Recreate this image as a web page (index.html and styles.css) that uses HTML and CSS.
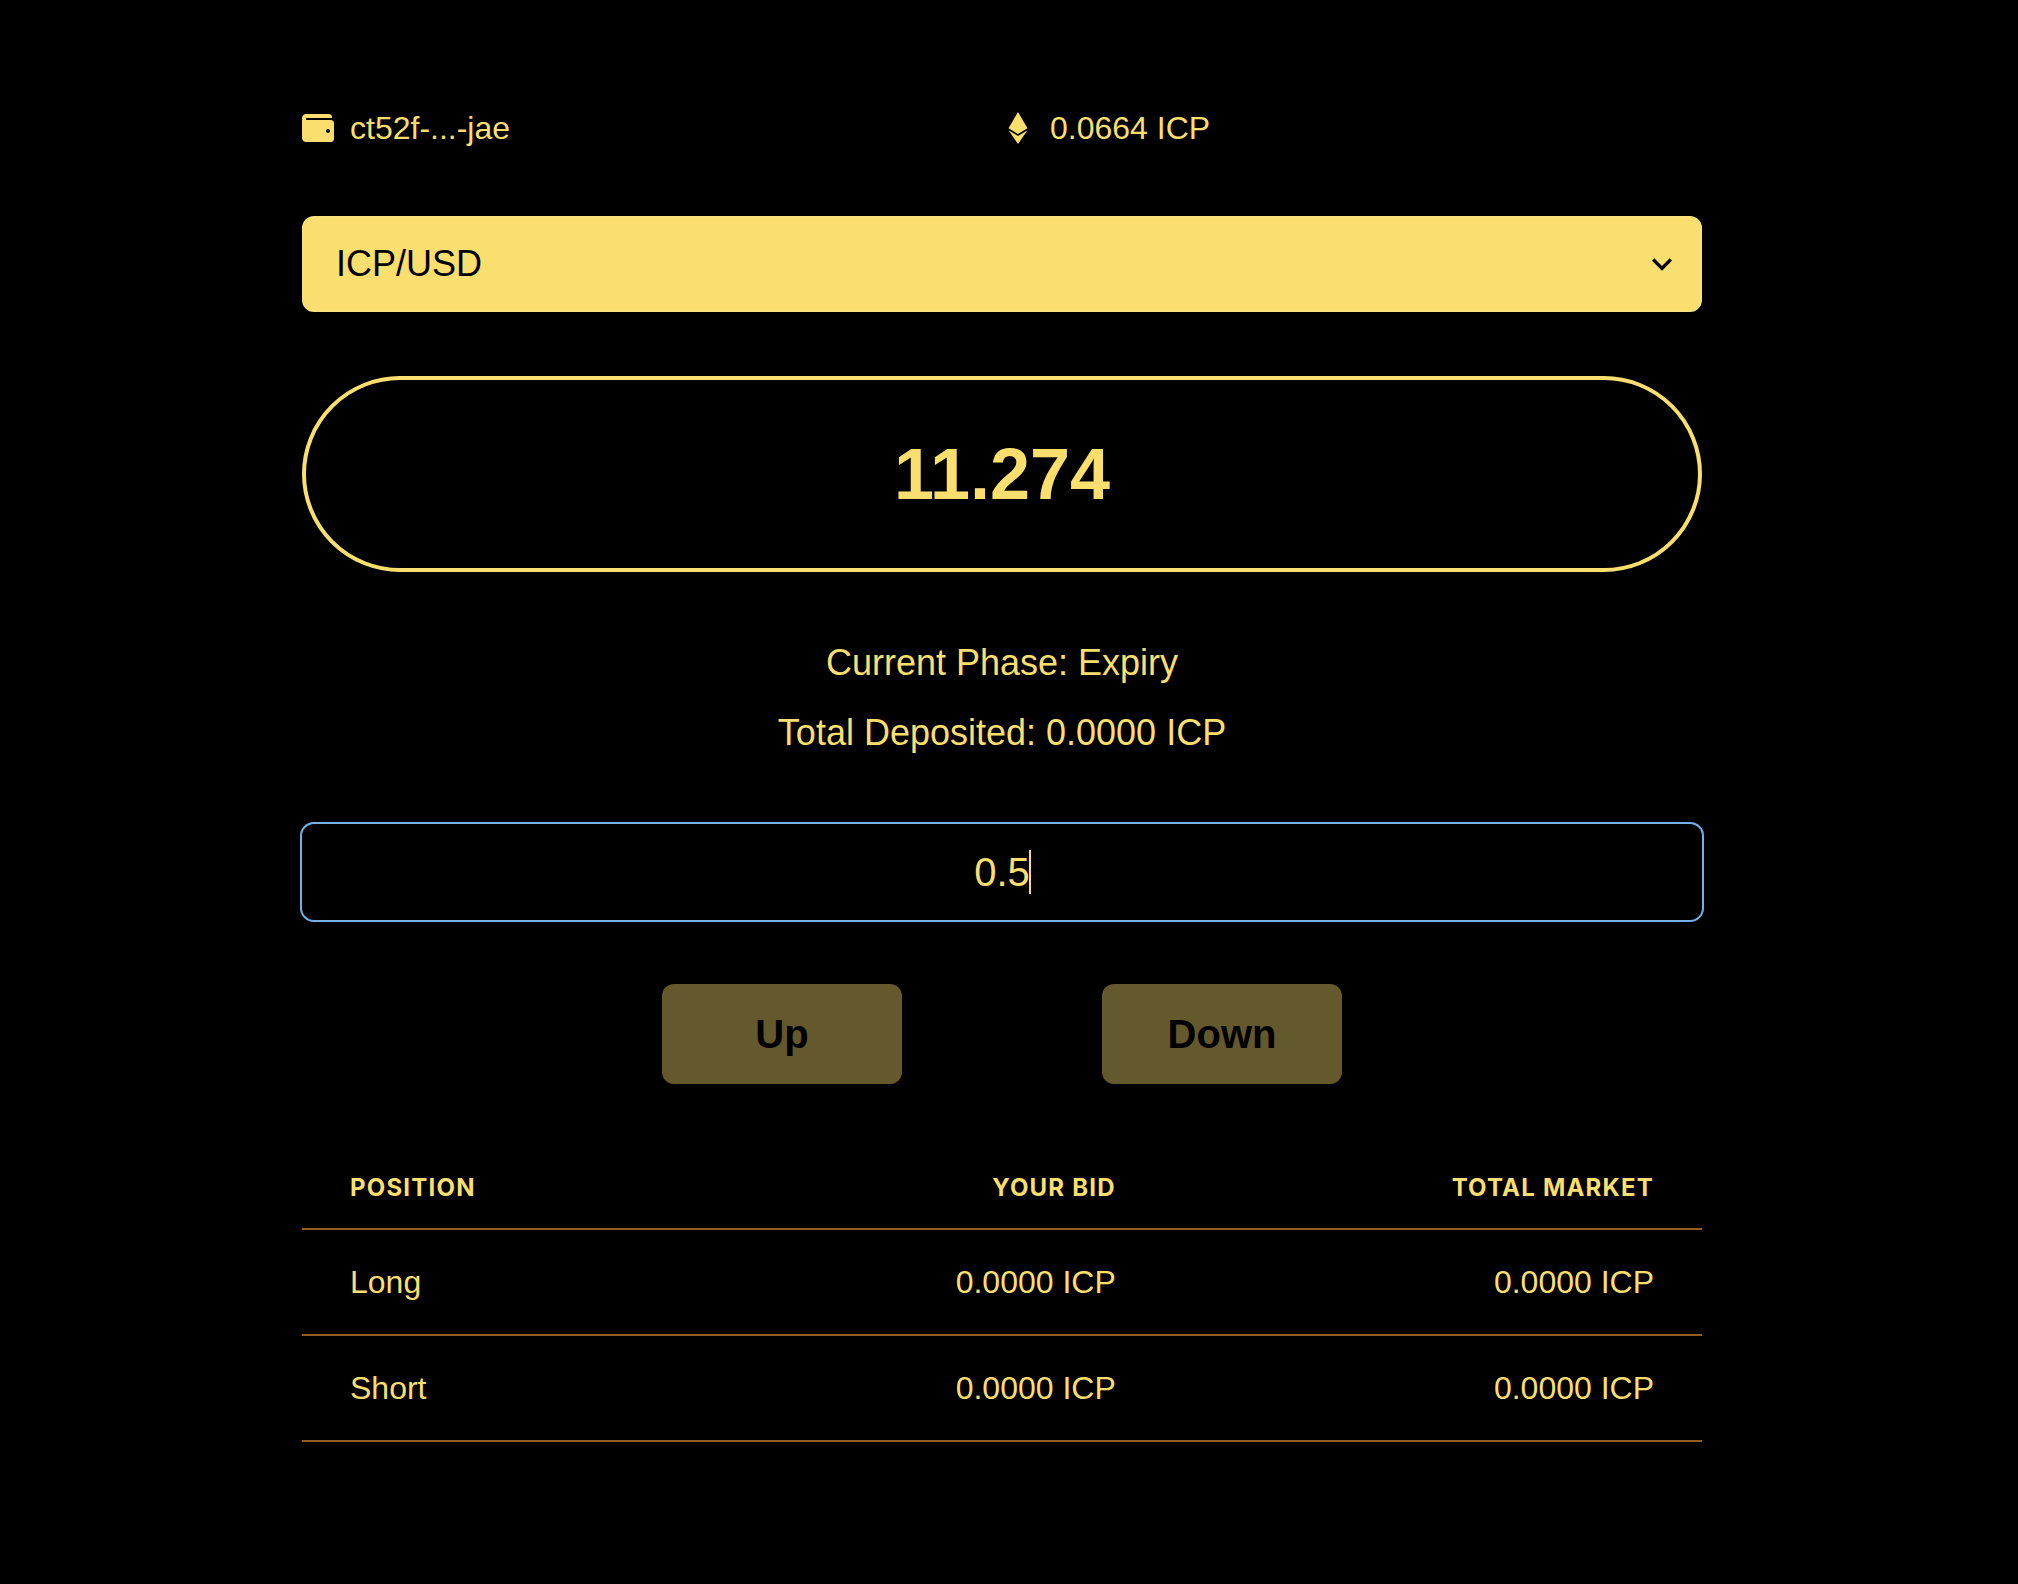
FILE: index.html
```html
<!DOCTYPE html>
<html lang="en">
<head>
  <meta charset="utf-8">
  <meta name="viewport" content="width=device-width, initial-scale=1">
  <title>ICP/USD</title>
  <link rel="stylesheet" href="styles.css">
</head>
<body>
  <main class="page">
    <header class="account">
      <div class="account-item">
        <svg class="icon" viewBox="0 0 512 512" aria-hidden="true"><path d="M461.2 128H80c-8.84 0-16-7.16-16-16s7.16-16 16-16h384c8.84 0 16-7.16 16-16 0-26.51-21.49-48-48-48H64C28.65 32 0 60.65 0 96v320c0 35.35 28.65 64 64 64h397.2c28.02 0 50.8-21.53 50.8-48V176c0-26.47-22.78-48-50.8-48zM416 336c-17.67 0-32-14.33-32-32s14.33-32 32-32 32 14.33 32 32-14.33 32-32 32z"/></svg>
        <span>ct52f-...-jae</span>
      </div>
      <div class="account-item">
        <svg class="icon" viewBox="0 0 320 512" aria-hidden="true"><path d="M311.9 260.8L160 353.6 8 260.8 160 0l151.9 260.8zM160 383.4L8 290.6 160 512l152-221.4-152 92.8z"/></svg>
        <span>0.0664 ICP</span>
      </div>
    </header>

    <div class="pair">
      <select class="pair-select" aria-label="Market">
        <option>ICP/USD</option>
      </select>
      <svg class="pair-arrow" viewBox="0 0 24 24" aria-hidden="true"><path d="M16.59 8.59L12 13.17 7.41 8.59 6 10l6 6 6-6z"/></svg>
    </div>

    <div class="price">11.274</div>

    <div class="status">
      <p>Current Phase: Expiry</p>
      <p>Total Deposited: 0.0000 ICP</p>
    </div>

    <div class="amount">
      <input class="amount-input" type="text" inputmode="decimal" value="0.5" aria-label="Amount">
    </div>

    <div class="actions">
      <button class="action" type="button" disabled>Up</button>
      <button class="action" type="button" disabled>Down</button>
    </div>

    <table class="positions">
      <thead>
        <tr><th scope="col">Position</th><th scope="col">Your Bid</th><th scope="col">Total Market</th></tr>
      </thead>
      <tbody>
        <tr><td>Long</td><td>0.0000 ICP</td><td>0.0000 ICP</td></tr>
        <tr><td>Short</td><td>0.0000 ICP</td><td>0.0000 ICP</td></tr>
      </tbody>
    </table>
  </main>
</body>
</html>
```
FILE: styles.css
```css
:root {
  --gold: #fadf6f;
  --line: #8f5c24;
  --focus: #74b1e8;
}

* {
  box-sizing: border-box;
}

body {
  margin: 0;
  padding: 104px 46px 104px 32px;
  background: #000;
  color: var(--gold);
  font-family: "Liberation Sans", Arial, sans-serif;
  font-size: 32px;
  line-height: 48px;
}

.page {
  display: flex;
  flex-direction: column;
  gap: 64px;
  max-width: 1400px;
  margin: 0 auto;
}

.account {
  display: grid;
  grid-template-columns: 1fr 1fr;
}

.account-item {
  display: flex;
  align-items: center;
  gap: 16px;
}

.icon {
  width: 32px;
  height: 32px;
  fill: currentColor;
}

.pair {
  position: relative;
}

.pair-select {
  display: block;
  width: 100%;
  height: 96px;
  padding: 0 64px 0 32px;
  border: 2px solid #fae07c;
  border-radius: 12px;
  background: var(--gold);
  color: #000;
  font: inherit;
  font-size: 36px;
  appearance: none;
}

.pair-arrow {
  position: absolute;
  top: 28px;
  right: 20px;
  width: 40px;
  height: 40px;
  fill: #000;
  pointer-events: none;
}

.price {
  padding: 40px;
  border: 4px solid var(--gold);
  border-radius: 100px;
  font-size: 72px;
  font-weight: 700;
  line-height: 108px;
  text-align: center;
}

.status {
  display: flex;
  flex-direction: column;
  gap: 16px;
  font-size: 36px;
  line-height: 54px;
  text-align: center;
}

.status p {
  margin: 0;
}

.amount {
  position: relative;
}

/* Text caret, shown steady at the end of the centred value */
.amount::after {
  content: "";
  position: absolute;
  top: 26px;
  left: calc(50% + 27px);
  width: 2px;
  height: 44px;
  background: var(--gold);
}

.amount-input {
  display: block;
  width: 100%;
  height: 96px;
  padding: 0 32px;
  border: 0;
  border-radius: 12px;
  outline: 0;
  box-shadow: 0 0 0 2px var(--focus);
  background: transparent;
  color: inherit;
  caret-color: transparent;
  font: inherit;
  font-size: 40px;
  text-align: center;
}

.actions {
  display: flex;
  justify-content: center;
  gap: 200px;
}

.action {
  width: 240px;
  height: 100px;
  border: 0;
  border-radius: 12px;
  background: var(--gold);
  color: #000;
  font: inherit;
  font-size: 40px;
  font-weight: 700;
}

.action:disabled {
  opacity: 0.4;
}

.positions {
  width: 100%;
  border-collapse: collapse;
}

.positions th,
.positions td {
  padding: 32px 48px;
  border-bottom: 2px solid var(--line);
  line-height: 40px;
  text-align: right;
}

.positions th {
  padding: 24px 48px;
  font-family: Inter, sans-serif;
  font-size: 24px;
  font-weight: 700;
  line-height: 32px;
  letter-spacing: 0.05em;
  text-transform: uppercase;
}

.positions th:first-child,
.positions td:first-child {
  text-align: left;
}

@media (max-width: 900px) {
  .actions {
    gap: 32px;
  }

  .positions th,
  .positions td {
    padding-left: 16px;
    padding-right: 16px;
  }
}
```
